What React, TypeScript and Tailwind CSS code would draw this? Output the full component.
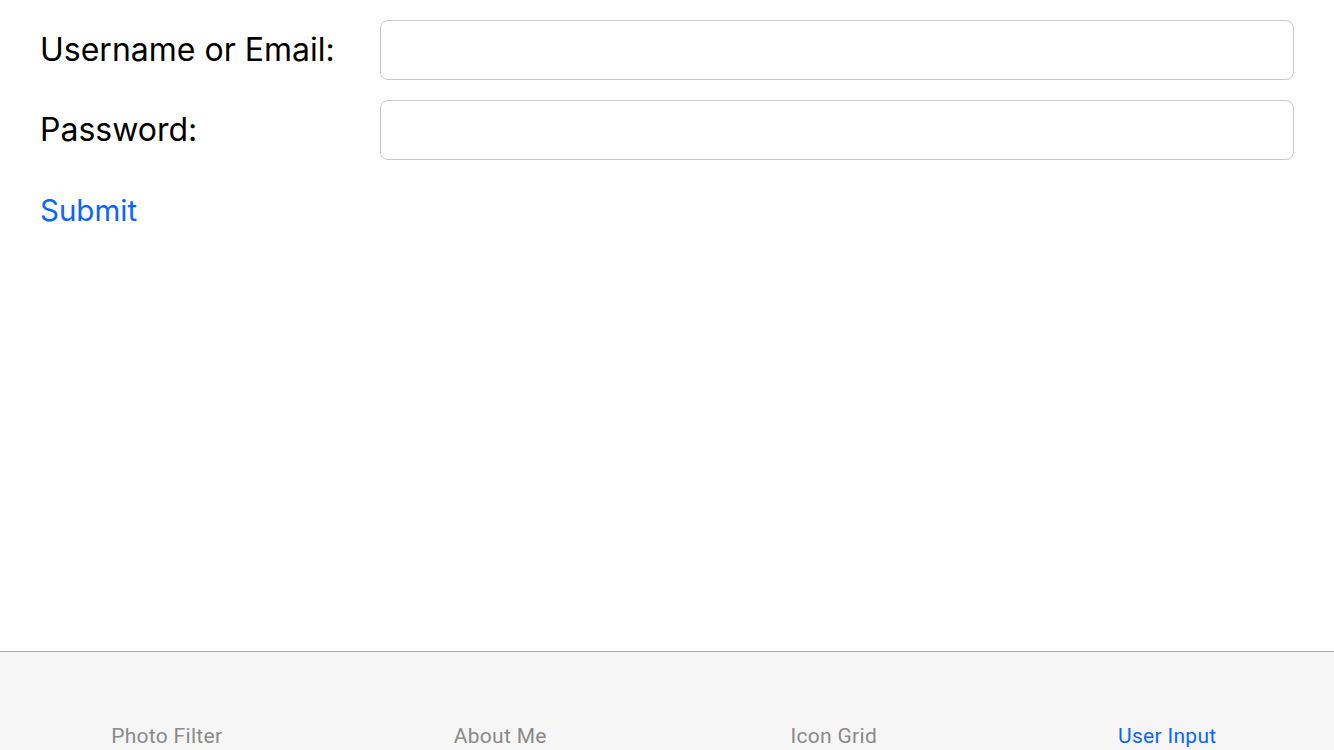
export default function App() {
  const tabs = ["Photo Filter", "About Me", "Icon Grid", "User Input"];

  return (
    <div className="flex h-[750px] w-[1334px] flex-col overflow-hidden bg-white" style={{ fontFamily: "Inter, 'Liberation Sans', sans-serif" }}>
      {/* Form */}
      <div className="flex flex-1 flex-col gap-5 px-10 pt-5">
        <div className="flex items-center">
          <label className="w-[340px] text-[32px] text-black">Username or Email:</label>
          <input type="text" className="h-[60px] flex-1 rounded-lg border border-[#c8c8c8] bg-white px-3 outline-none" />
        </div>
        <div className="flex items-center">
          <label className="w-[340px] text-[32px] text-black">Password:</label>
          <input type="password" className="h-[60px] flex-1 rounded-lg border border-[#c8c8c8] bg-white px-3 outline-none" />
        </div>
        <div className="flex h-[60px] items-center">
          <button className="text-[29.5px] text-[#0a64ff]">Submit</button>
        </div>
      </div>

      {/* Tab bar */}
      <div className="grid h-[99px] grid-cols-4 items-end border-t border-[#a8a8a8] bg-[#f6f6f6]" style={{ fontFamily: "Roboto, 'Liberation Sans', sans-serif" }}>
        {tabs.map((t, i) => (
          <div key={i} className={`text-center text-[21px] leading-7 tracking-[0.3px] ${i === 3 ? "text-[#0a64ff]" : "text-[#8a8a8a]"}`}>
            {t}
          </div>
        ))}
      </div>
    </div>
  );
}
